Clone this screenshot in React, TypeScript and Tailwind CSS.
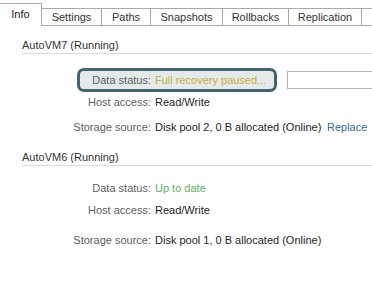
const tabs = [
	{ label: 'Settings', w: 'w-[60px]' },
	{ label: 'Paths', w: 'w-[49px]' },
	{ label: 'Snapshots', w: 'w-[72px]' },
	{ label: 'Rollbacks', w: 'w-[66px]' },
	{ label: 'Replication', w: 'w-[73px]' },
	{ label: '', w: 'w-[40px]' },
];

function Row({
	label,
	children,
	className,
}: {
	label: string;
	children: React.ReactNode;
	className?: string;
}) {
	return (
		<div className={`relative flex items-center ${className ?? ''}`}>
			<div className="relative z-10 w-[151px] shrink-0 text-right text-[#5e5e5e]">{label}</div>
			<div className="pl-[4px] flex items-center flex-1 min-w-0">{children}</div>
		</div>
	);
}

export default function App() {
	return (
		<div
			className="w-[372px] h-[285px] overflow-hidden bg-white text-[11px] leading-[14px] text-[#1e1e1e]"
			style={{ fontFamily: '"Liberation Sans", Arial, sans-serif' }}
		>
			{/* Tabs */}
			<div className="flex h-[26px] pt-[3px] whitespace-nowrap">
				<div className="w-[42px] h-[23px] shrink-0 border-t border-r border-[#a9a9a9] flex items-center justify-center text-[#222] pb-[2px]">
					Info
				</div>
				{tabs.map((t, i) => (
					<div
						key={i}
						className={`${t.w} shrink-0 mt-[5px] h-[18px] border-t border-r border-b border-[#a9a9a9] flex items-center justify-center text-[#333]`}
					>
						{t.label}
					</div>
				))}
			</div>

			{/* AutoVM7 */}
			<div className="ml-[22px] mt-[12px] h-[16px] border-b border-[#d9d9d9] leading-[15px] text-[#333]">
				AutoVM7 (Running)
			</div>

			<Row label="Data status:" className="mt-[17px] h-[18px]">
				<div className="absolute left-[77px] top-[-3px] w-[200px] h-[24px] rounded-[7px] border-[3px] border-[#3e6570] bg-[#e5e9e9]" />
				<span className="relative z-10 w-[132px] shrink-0 text-[#c4b040]">Full recovery paused...</span>
				<div className="flex-1 h-[18px] border border-r-0 border-[#b4b4b4] bg-white" />
			</Row>
			<Row label="Host access:" className="mt-[6px] h-[14px]">
				<span>Read/Write</span>
			</Row>
			<Row label="Storage source:" className="mt-[11px] h-[14px]">
				<span className="w-[172px] shrink-0 whitespace-nowrap">Disk pool 2, 0 B allocated (Online)</span>
				<span className="text-[#2f6b9c]">Replace</span>
			</Row>

			{/* AutoVM6 */}
			<div className="ml-[22px] mt-[16px] h-[16px] border-b border-[#d9d9d9] leading-[15px] text-[#333]">
				AutoVM6 (Running)
			</div>

			<Row label="Data status:" className="mt-[15px] h-[14px]">
				<span className="text-[#5bb25e]">Up to date</span>
			</Row>
			<Row label="Host access:" className="mt-[8px] h-[14px]">
				<span>Read/Write</span>
			</Row>
			<Row label="Storage source:" className="mt-[16px] h-[14px]">
				<span className="whitespace-nowrap">Disk pool 1, 0 B allocated (Online)</span>
			</Row>
		</div>
	);
}
